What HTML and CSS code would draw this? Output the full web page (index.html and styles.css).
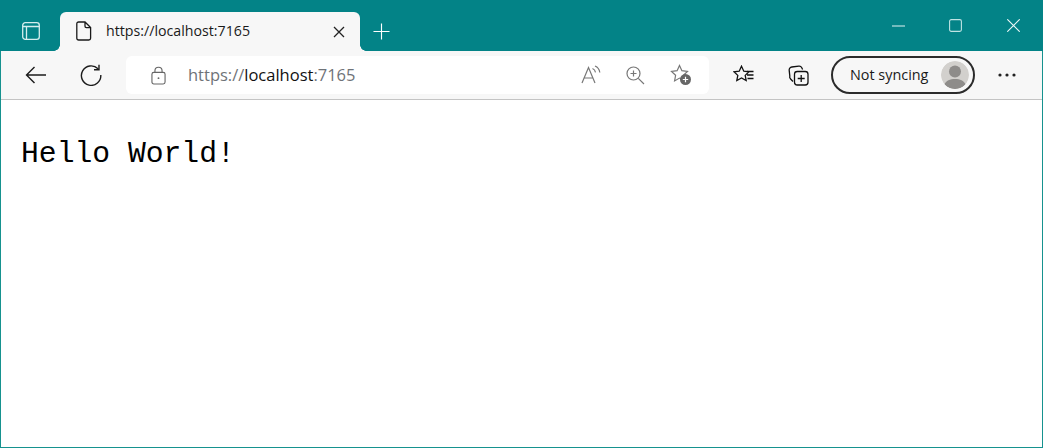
FILE: index.html
```html
<!DOCTYPE html>
<html lang="en">
<head>
<meta charset="utf-8">
<title>Hello World</title>
<link rel="stylesheet" href="styles.css">
</head>
<body>
<div class="window">
  <header class="titlebar">
    <div class="tab-actions">
      <svg class="icon20" viewBox="0 0 18 18" fill="none" stroke="#d5eeee" stroke-width="1.3"><rect x=".7" y=".7" width="16.6" height="16.6" rx="2.6"/><path d="M.7 4.500H17.300M4.500 4.500V17.300"/></svg>
    </div>
    <div class="tab">
      <svg class="tab-page" viewBox="0 0 16 20" fill="none" stroke="#1a1a1a" stroke-width="1.3"><path d="M2.6 1h6.4l5.6 5.6v10.6a1.8 1.8 0 0 1-1.8 1.8H2.6a1.8 1.8 0 0 1-1.8-1.8V2.8A1.8 1.8 0 0 1 2.6 1zM9 1v4.2a1.4 1.4 0 0 0 1.4 1.4h4.2"/></svg>
      <span class="tab-title">https://localhost:7165</span>
      <svg class="tab-close" viewBox="0 0 12 12" fill="none" stroke="#222" stroke-width="1.3"><path d="M1 1l10 10M11 1L1 11"/></svg>
    </div>
    <svg class="new-tab" viewBox="0 0 18 18" fill="none" stroke="#fff" stroke-width="1.2"><path d="M9 .5v17M.5 9h17"/></svg>
    <div class="window-controls">
      <svg class="min" viewBox="0 0 13 2" fill="none" stroke="#e4f3f3" stroke-width="1"><path d="M0 1h13"/></svg>
      <svg class="max" viewBox="0 0 13 13" fill="none" stroke="#bfe3e3" stroke-width="1.1"><rect x=".6" y=".6" width="11.8" height="11.8" rx="1.6"/></svg>
      <svg class="close" viewBox="0 0 13 13" fill="none" stroke="#eef8f8" stroke-width="1.1"><path d="M.3.3l12.400 12.400M12.700.3L.3 12.700"/></svg>
    </div>
  </header>

  <nav class="toolbar">
    <svg class="back" viewBox="0 0 22 18" fill="none" stroke="#1c1c1c" stroke-width="1.4"><path d="M21 9H1.500M9.500 1L1.500 9l8 8"/></svg>
    <svg class="reload" viewBox="0 0 22 22" fill="none" stroke="#1c1c1c" stroke-width="1.4"><path d="M18 4.800A9.700 9.700 0 1 0 20.800 11M19 .8v5h-5"/></svg>
    <div class="address">
      <svg class="lock" viewBox="0 0 16 20" fill="none" stroke="#666" stroke-width="1.2"><rect x="1" y="6.6" width="14" height="12.4" rx="2"/><path d="M4.200 6.600V5a3.800 3.800 0 0 1 7.600 0v1.600"/><circle cx="8" cy="12.800" r="1" fill="#666" stroke="none"/></svg>
      <span class="url"><span class="dim">https://</span>localhost<span class="dim">:7165</span></span>
      <div class="addr-icons">
        <svg class="read" viewBox="0 0 20 20" fill="none" stroke="#777" stroke-width="1.2"><path d="M1 18L7.500 2.500 14 18M3.100 13h8.800M11.500 3.500c1.500.6 2.700 2 3 3.800M14 1c2.500 1 4.400 3.500 4.800 6.500"/></svg>
        <svg class="zoom-in" viewBox="0 0 19 19" fill="none" stroke="#777" stroke-width="1.2"><circle cx="7.500" cy="7.500" r="6.500"/><path d="M12.300 12.300L18 18M7.500 4.500v6M4.500 7.500h6"/></svg>
        <svg class="fav-add" viewBox="0 0 22 22" fill="none"><path d="M9.500 1.500l2.400 5.200 5.600.7-4.100 3.900 1 5.600-4.900-2.800-4.900 2.800 1-5.600L1.500 7.400l5.600-.7z" stroke="#777" stroke-width="1.200"/><circle cx="15.500" cy="15.500" r="5.500" fill="#666"/><path d="M15.500 12.800v5.400M12.800 15.500h5.400" stroke="#fff" stroke-width="1.200"/></svg>
      </div>
    </div>
    <svg class="favorites" viewBox="0 0 22 20" fill="none" stroke="#111" stroke-width="1.300"><path d="M8.500 1.200l2.300 5 5.200.6-3.800 3.600 1 5.200-4.700-2.600-4.700 2.600 1-5.200L1 6.800l5.200-.6zM14 6.500h6.500M14 10h6.500M14.500 13.500h6"/></svg>
    <svg class="collections" viewBox="0 0 21 21" fill="none" stroke="#111" stroke-width="1.300"><rect x="6.500" y="6.500" width="13.500" height="13.500" rx="2.800"/><path d="M13.200 10v7M9.700 13.500h7M5 16.500L2.600 14A3 3 0 0 1 1.800 11L1.200 5.400A3 3 0 0 1 3.800 2l7-.8a3 3 0 0 1 3 1.500l.8 1.800"/></svg>
    <div class="profile">
      <span class="sync">Not syncing</span>
      <span class="avatar">
        <svg viewBox="0 0 28 28"><circle cx="14" cy="14" r="14" fill="#d2d0cd"/><circle cx="14" cy="10.500" r="6" fill="#8e8c8a"/><path d="M3.500 23.500C5 19.500 9 18 14 18s9 1.500 10.500 5.500A14 14 0 0 1 14 28 14 14 0 0 1 3.500 23.500z" fill="#8e8c8a"/></svg>
      </span>
    </div>
    <svg class="more" viewBox="0 0 18 4" fill="#222"><circle cx="2" cy="2" r="1.600"/><circle cx="9" cy="2" r="1.600"/><circle cx="16" cy="2" r="1.600"/></svg>
  </nav>

  <main class="content">
    <p class="hello">Hello World!</p>
  </main>
</div>
</body>
</html>
```
FILE: styles.css
```css
* { box-sizing: border-box; }
html, body { margin: 0; height: 100%; overflow: hidden; }
body { background: #fff; font-family: "Open Sans", "Noto Sans", sans-serif; }
svg { display: block; flex: none; }

.window {
  width: 1043px;
  height: 448px;
  display: flex;
  flex-direction: column;
  border: 1px solid #16928f;
  border-top: 0;
}

/* Title bar */
.titlebar {
  height: 51px;
  margin: 0 -1px;
  background: #038387;
  display: flex;
  align-items: flex-end;
  flex: none;
}
.tab-actions { width: 60px; height: 39px; padding: 10px 0 0 22px; }
.icon20 { width: 18px; height: 18px; }
.tab {
  width: 300px;
  height: 39px;
  background: #f7f7f7;
  border-radius: 6px 6px 0 0;
  display: flex;
  align-items: center;
  padding: 0 15px 0 16px;
  position: relative;
}
.tab::before, .tab::after {
  content: "";
  position: absolute;
  bottom: 0;
  width: 6px;
  height: 6px;
  background: radial-gradient(circle at 0 0, transparent 5.500px, #f7f7f7 6px);
}
.tab::before { left: -6px; }
.tab::after { right: -6px; transform: scaleX(-1); }
.tab-page { width: 16px; height: 20px; margin-bottom: 2px; }
.tab-title { margin-left: 14px; flex: 1; font-size: 14.200px; color: #1a1a1a; margin-bottom: 2px; }
.tab-close { width: 12px; height: 12px; }
.new-tab { width: 17px; height: 17px; margin: 0 0 11px 13px; }
.window-controls {
  margin-left: auto;
  height: 51px;
  display: flex;
  align-items: center;
  padding: 0 23px 0 0;
  gap: 44px;
}
.min { width: 13px; height: 2px; }
.max { width: 13px; height: 13px; }
.close { width: 13px; height: 13px; margin-left: 1px; }

/* Toolbar */
.toolbar {
  height: 49px;
  flex: none;
  background: #f7f7f7;
  border-bottom: 1px solid #c4c4c4;
  display: flex;
  align-items: center;
  padding-left: 24px;
}
.back { width: 22px; height: 18px; }
.reload { width: 22px; height: 22px; margin-left: 33px; }
.address {
  width: 583px;
  height: 38px;
  margin-left: 24px;
  background: #fff;
  border-radius: 6px;
  display: flex;
  align-items: center;
  padding-left: 25px;
}
.lock { width: 15px; height: 19px; }
.url { margin: 0 0 2px 22px; font-size: 16.500px; color: #111; }
.dim { color: #6f7378; }
.addr-icons { margin-left: auto; display: flex; align-items: center; gap: 25px; padding-right: 17px; }
.read { width: 20px; height: 20px; }
.zoom-in { width: 19px; height: 19px; }
.fav-add { width: 22px; height: 22px; }
.favorites { width: 22px; height: 20px; margin-left: 24px; }
.collections { width: 21px; height: 21px; margin-left: 33px; }
.profile {
  width: 144px;
  height: 38px;
  margin-left: 22px;
  border: 2px solid #2b2b2b;
  border-radius: 19px;
  display: flex;
  align-items: center;
  padding: 0 4px 0 17px;
  justify-content: space-between;
}
.sync { font-size: 14.400px; color: #1a1a1a; margin-bottom: 2px; }
.avatar { width: 28px; height: 28px; border-radius: 50%; overflow: hidden; }
.avatar svg { width: 28px; height: 28px; }
.more { width: 18px; height: 4px; margin-left: 23px; }

/* Page content */
.content { flex: 1; background: #fff; padding: 0 20px; }
.hello {
  margin: 33px 0 0;
  font-family: "Liberation Mono", monospace;
  font-size: 29.700px;
  line-height: 42px;
  color: #000;
}
```
